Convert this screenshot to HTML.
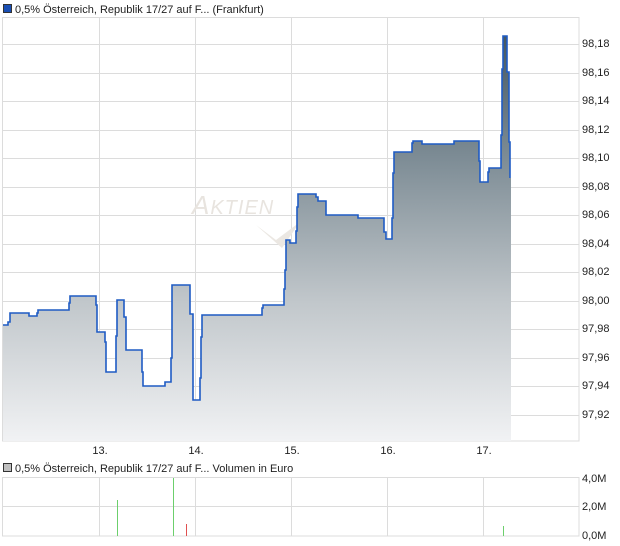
<!DOCTYPE html>
<html><head><meta charset="utf-8"><style>
html,body{margin:0;padding:0;background:#fff;width:620px;height:546px;overflow:hidden}
svg{display:block}
text{font-family:"Liberation Sans",sans-serif;font-size:11px;fill:#222}
</style></head><body>
<svg width="620" height="546" viewBox="0 0 620 546" xmlns="http://www.w3.org/2000/svg">
<defs>
<linearGradient id="g" x1="0" y1="36" x2="0" y2="441" gradientUnits="userSpaceOnUse">
<stop offset="0" stop-color="#445763"/>
<stop offset="0.3" stop-color="#7d8c95"/>
<stop offset="0.65" stop-color="#c0c6ca"/>
<stop offset="1" stop-color="#f1f2f4"/>
</linearGradient>
</defs>
<rect x="3.5" y="4.5" width="8" height="8" fill="#1a4fb4" stroke="#333" stroke-width="1"/>
<text x="15" y="13">0,5% Österreich, Republik 17/27 auf F... (Frankfurt)</text>
<g stroke="#dcdcdc" stroke-width="1">
<line x1="3" y1="44.5" x2="579" y2="44.5"/><line x1="3" y1="73.5" x2="579" y2="73.5"/>
<line x1="3" y1="101.5" x2="579" y2="101.5"/><line x1="3" y1="130.5" x2="579" y2="130.5"/>
<line x1="3" y1="158.5" x2="579" y2="158.5"/><line x1="3" y1="187.5" x2="579" y2="187.5"/>
<line x1="3" y1="215.5" x2="579" y2="215.5"/><line x1="3" y1="244.5" x2="579" y2="244.5"/>
<line x1="3" y1="272.5" x2="579" y2="272.5"/><line x1="3" y1="301.5" x2="579" y2="301.5"/>
<line x1="3" y1="329.5" x2="579" y2="329.5"/><line x1="3" y1="358.5" x2="579" y2="358.5"/>
<line x1="3" y1="386.5" x2="579" y2="386.5"/><line x1="3" y1="415.5" x2="579" y2="415.5"/>
<line x1="99.5" y1="18" x2="99.5" y2="441"/><line x1="195.5" y1="18" x2="195.5" y2="441"/>
<line x1="291.5" y1="18" x2="291.5" y2="441"/><line x1="387.5" y1="18" x2="387.5" y2="441"/>
<line x1="483.5" y1="18" x2="483.5" y2="441"/>
</g>
<rect x="2.5" y="17.5" width="576.5" height="423.5" fill="none" stroke="#dcdcdc"/>
<text x="192" y="214" style="font-size:26px;font-style:italic;fill:#e8e4df;letter-spacing:1px">A<tspan style="font-size:20px">KTIEN</tspan></text>
<path d="M256 225 L276 240 L300 222 L282 248 Z" fill="#ebe7e2"/>
<path fill="url(#g)" d="M3 325 H8 V322 H10 V313 H29 V316 H37 V313 H38 V310 H69 V303 H70 V296 H96 V305 H97 V332 H105 V342 H106 V372 H116 V336 H117 V300 H124 V317 H126 V350 H142 V372 H143 V386 H165 V382 H171 V358 H172 V285 H190 V314 H193 V400 H200 V378 H201 V337 H202 V315 H262 V308 H263 V305 H284 V289 H285 V270 H286 V240 H290 V243 H296 V231 H297 V207 H298 V194 H316 V197 H318 V201 H326 V215 H358 V218 H384 V232 H386 V239 H392 V218 H393 V173 H394 V152 H412 V143 H413 V141 H422 V144 H454 V141 H479 V161 H480 V182 H488 V172 H489 V168 H501 V135 H502 V69 H503 V36 H507 V72 H509 V142 H510 V178 H511 V441 H3 Z"/>
<path fill="none" stroke="#1f5bc4" stroke-width="1.6" d="M3 325 H8 V322 H10 V313 H29 V316 H37 V313 H38 V310 H69 V303 H70 V296 H96 V305 H97 V332 H105 V342 H106 V372 H116 V336 H117 V300 H124 V317 H126 V350 H142 V372 H143 V386 H165 V382 H171 V358 H172 V285 H190 V314 H193 V400 H200 V378 H201 V337 H202 V315 H262 V308 H263 V305 H284 V289 H285 V270 H286 V240 H290 V243 H296 V231 H297 V207 H298 V194 H316 V197 H318 V201 H326 V215 H358 V218 H384 V232 H386 V239 H392 V218 H393 V173 H394 V152 H412 V143 H413 V141 H422 V144 H454 V141 H479 V161 H480 V182 H488 V172 H489 V168 H501 V135 H502 V69 H503 V36 H507 V72 H509 V142 H510 V178"/>
<g>
<text x="582" y="47">98,18</text><text x="582" y="76">98,16</text>
<text x="582" y="104">98,14</text><text x="582" y="133">98,12</text>
<text x="582" y="161">98,10</text><text x="582" y="190">98,08</text>
<text x="582" y="218">98,06</text><text x="582" y="247">98,04</text>
<text x="582" y="275">98,02</text><text x="582" y="304">98,00</text>
<text x="582" y="332">97,98</text><text x="582" y="361">97,96</text>
<text x="582" y="389">97,94</text><text x="582" y="418">97,92</text>
</g>
<g text-anchor="middle">
<text x="100" y="454">13.</text><text x="196" y="454">14.</text>
<text x="292" y="454">15.</text><text x="388" y="454">16.</text>
<text x="484" y="454">17.</text>
</g>
<rect x="3.5" y="463.5" width="8" height="8" fill="#c0c0c0" stroke="#333"/>
<text x="15" y="472">0,5% Österreich, Republik 17/27 auf F... Volumen in Euro</text>
<g stroke="#dcdcdc" stroke-width="1">
<line x1="3" y1="506.5" x2="579" y2="506.5"/>
<line x1="99.5" y1="478" x2="99.5" y2="536"/><line x1="195.5" y1="478" x2="195.5" y2="536"/>
<line x1="291.5" y1="478" x2="291.5" y2="536"/><line x1="387.5" y1="478" x2="387.5" y2="536"/>
<line x1="483.5" y1="478" x2="483.5" y2="536"/>
</g>
<rect x="2.5" y="477.5" width="576.5" height="58.5" fill="none" stroke="#dcdcdc"/>
<line x1="117.5" y1="500" x2="117.5" y2="536" stroke="#6ccf6c"/>
<line x1="173.5" y1="478" x2="173.5" y2="536" stroke="#6ccf6c"/>
<line x1="186.5" y1="524" x2="186.5" y2="536" stroke="#e05050"/>
<line x1="503.5" y1="526" x2="503.5" y2="536" stroke="#6ccf6c"/>
<text x="582" y="482">4,0M</text><text x="582" y="510">2,0M</text><text x="582" y="539">0,0M</text>
</svg>
</body></html>
